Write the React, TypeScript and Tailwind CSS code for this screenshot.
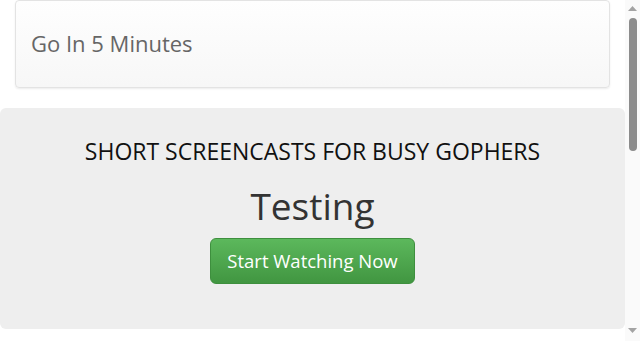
export default function App() {
  return (
    <div
      className="flex h-[341px] overflow-hidden bg-white text-[#333]"
      style={{ fontFamily: '"Open Sans", "Liberation Sans", sans-serif' }}
    >
      <div className="flex-1">
        <div className="px-[15px]">
          <div className="flex h-[88px] items-center rounded border border-[#e3e3e3] bg-gradient-to-b from-[#fefefe] to-[#f7f7f7] px-[15px] pb-[2px] shadow-[0_1px_2px_rgba(0,0,0,0.08)]">
            <h3 className="text-[22px] text-[#666]">Go In 5 Minutes</h3>
          </div>
        </div>
        <div className="mt-[20px] flex h-[221px] flex-col items-center rounded-md bg-[#eee] pt-[30px]">
          <p className="text-[23px] leading-[26px] text-[#111]">
            SHORT SCREENCASTS FOR BUSY GOPHERS
          </p>
          <h1 className="mt-[21px] text-[37px] leading-[42px] text-[#333]">Testing</h1>
          <button className="mt-[11px] h-[46px] w-[205px] rounded-md border border-[#3e8f3e] bg-gradient-to-b from-[#5cb85c] to-[#419641] text-[18.5px] text-white">
            Start Watching Now
          </button>
        </div>
      </div>
      {/* scrollbar */}
      <div className="flex w-[15px] flex-col items-center bg-[#fafafa] pb-[8px] pt-[6px]">
        <svg width="9" height="5" viewBox="0 0 9 5">
          <path d="M4.5 0 L9 5 L0 5 Z" fill="#a3a3a3" />
        </svg>
        <div className="mt-[7px] h-[133px] w-[8px] rounded-full bg-[#8c8c8c]" />
        <div className="flex-1" />
        <svg width="9" height="5" viewBox="0 0 9 5">
          <path d="M0 0 L9 0 L4.5 5 Z" fill="#a3a3a3" />
        </svg>
      </div>
    </div>
  );
}
